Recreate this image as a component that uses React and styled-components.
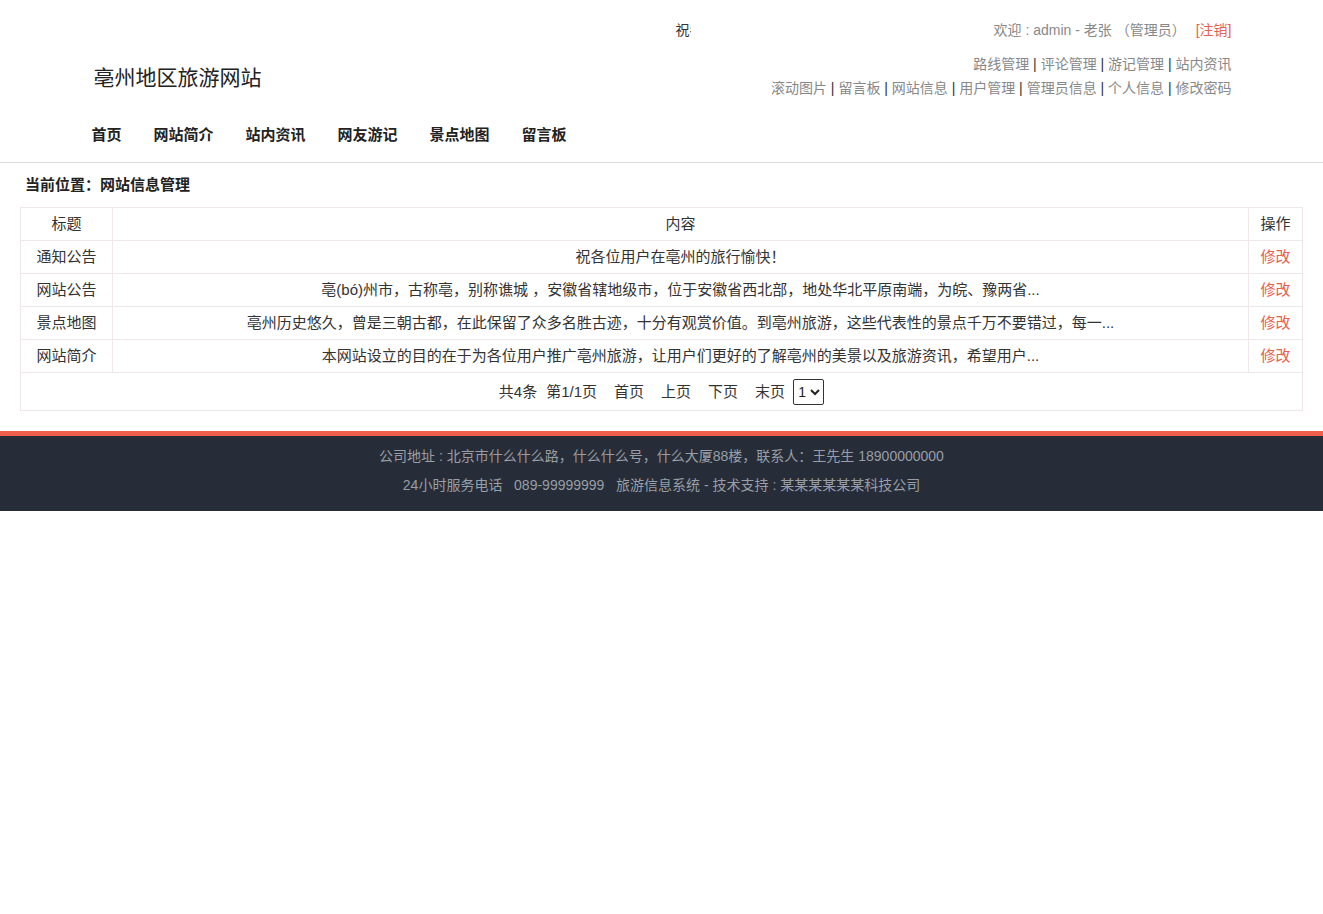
import styled, { createGlobalStyle } from "styled-components";

const GlobalStyle = createGlobalStyle`
body{
  margin:0;
  background:#fff;
  font-family:"Liberation Sans","Noto Sans CJK SC",sans-serif;
  font-size:14px;
  color:#333;
  text-spacing-trim:space-all;
}
a{text-decoration:none;}
`

const Header = styled.header`
border-bottom:1px solid #ddd;
padding:20px 0 7px;
`

const Container = styled.div`
width:1140px;
margin:0 auto;
`

const TopRow = styled.div`
display:flex;
align-items:center;
height:20px;
line-height:20px;
`

const Marquee = styled.div`
width:299px;
margin-left:300px;
overflow:hidden;
white-space:nowrap;
color:#333;
`

const MarqueeText = styled.span`
display:inline-block;
padding-left:284px;
`

const Welcome = styled.div`
margin-left:auto;
color:#888;
`

const Logout = styled.a`
color:#e4604f;
margin-left:10px;
`

const MiddleRow = styled.div`
display:flex;
justify-content:space-between;
align-items:center;
margin-top:12px;
`

const Title = styled.h1`
margin:0 0 0 2px;
font-size:21px;
font-weight:normal;
color:#222;
`

const AdminLinks = styled.div`
text-align:right;
line-height:24px;
color:#333;
`

const AdminLink = styled.a`
color:#888;
`

const Nav = styled.nav`
display:flex;
gap:32px;
height:40px;
line-height:40px;
margin-top:15px;
`

const NavLink = styled.a`
color:#222;
font-weight:bold;
font-size:15px;
`

const Main = styled.main`
padding:0 20px;
font-size:15px;
`

const Crumb = styled.div`
font-weight:bold;
color:#222;
line-height:20px;
margin:12px 0;
padding-left:5px;
`

const Table = styled.table`
width:100%;
border-collapse:collapse;
border:1px solid #efe7e9;
`

const Cell = styled.td`
border:1px solid #efe7e9;
height:32px;
padding:0 8px;
text-align:center;
line-height:20px;
color:${p => p.$edit ? "#e4604f" : "#333"};
width:${p => p.$w || "auto"};
`

const PagerCell = styled.td`
height:37px;
padding:0;
text-align:center;
border:1px solid #efe7e9;
line-height:20px;
`

const Pager = styled.div`
display:inline-flex;
align-items:center;
gap:17px;
vertical-align:middle;
`

const PagerText = styled.span`
margin-right:${p => p.$tight ? "-8px" : "0"};
`

const PageSelect = styled.select`
height:26px;
width:31px;
margin-left:-9px;
border:1px solid #333;
border-radius:2px;
background:#fff;
font-size:14px;
padding:0;
color:#222;
`

const Footer = styled.footer`
margin-top:20px;
border-top:5px solid #ef5f4c;
background:#262d38;
padding:6px 0 11px;
text-align:center;
line-height:29px;
color:#999ea6;
`

const rows = [
  ["通知公告", "祝各位用户在亳州的旅行愉快！"],
  ["网站公告", "亳(bó)州市，古称亳，别称谯城 ，安徽省辖地级市，位于安徽省西北部，地处华北平原南端，为皖、豫两省..."],
  ["景点地图", "亳州历史悠久，曾是三朝古都，在此保留了众多名胜古迹，十分有观赏价值。到亳州旅游，这些代表性的景点千万不要错过，每一..."],
  ["网站简介", "本网站设立的目的在于为各位用户推广亳州旅游，让用户们更好的了解亳州的美景以及旅游资讯，希望用户..."],
];

const nav = ["首页", "网站简介", "站内资讯", "网友游记", "景点地图", "留言板"];
const admin1 = ["路线管理", "评论管理", "游记管理", "站内资讯"];
const admin2 = ["滚动图片", "留言板", "网站信息", "用户管理", "管理员信息 ", "个人信息", "修改密码"];

function Links({ items }) {
  return items.map((t, i) => (
    <span key={t}>
      {i > 0 && " | "}
      <AdminLink href="#">{t}</AdminLink>
    </span>
  ));
}

export default function App() {
  return (
    <>
      <GlobalStyle />
      <Header>
        <Container>
          <TopRow>
            <Marquee>
              <MarqueeText>祝各位用户在亳州的旅行愉快！</MarqueeText>
            </Marquee>
            <Welcome>
              欢迎 : admin - 老张 （管理员）
              <Logout href="#">[注销]</Logout>
            </Welcome>
          </TopRow>
          <MiddleRow>
            <Title>亳州地区旅游网站</Title>
            <AdminLinks>
              <div><Links items={admin1} /></div>
              <div><Links items={admin2} /></div>
            </AdminLinks>
          </MiddleRow>
          <Nav>
            {nav.map(n => <NavLink key={n} href="#">{n}</NavLink>)}
          </Nav>
        </Container>
      </Header>

      <Main>
        <Crumb>当前位置：网站信息管理</Crumb>
        <Table>
          <tbody>
            <tr>
              <Cell $w="75px">标题</Cell>
              <Cell>内容</Cell>
              <Cell $w="37px">操作</Cell>
            </tr>
            {rows.map(r => (
              <tr key={r[0]}>
                <Cell>{r[0]}</Cell>
                <Cell>{r[1]}</Cell>
                <Cell $edit>修改</Cell>
              </tr>
            ))}
            <tr>
              <PagerCell colSpan={3}>
                <Pager>
                  <PagerText $tight>共4条</PagerText>
                  <PagerText>第1/1页</PagerText>
                  <PagerText>首页</PagerText>
                  <PagerText>上页</PagerText>
                  <PagerText>下页</PagerText>
                  <PagerText>末页</PagerText>
                  <PageSelect defaultValue="1">
                    <option value="1">1</option>
                  </PageSelect>
                </Pager>
              </PagerCell>
            </tr>
          </tbody>
        </Table>
      </Main>

      <Footer>
        <div>公司地址 : 北京市什么什么路，什么什么号，什么大厦88楼，联系人：王先生 18900000000</div>
        <div>24小时服务电话&nbsp;&nbsp;&nbsp;089-99999999&nbsp;&nbsp;&nbsp;旅游信息系统 - 技术支持 : 某某某某某某科技公司</div>
      </Footer>
    </>
  );
}
